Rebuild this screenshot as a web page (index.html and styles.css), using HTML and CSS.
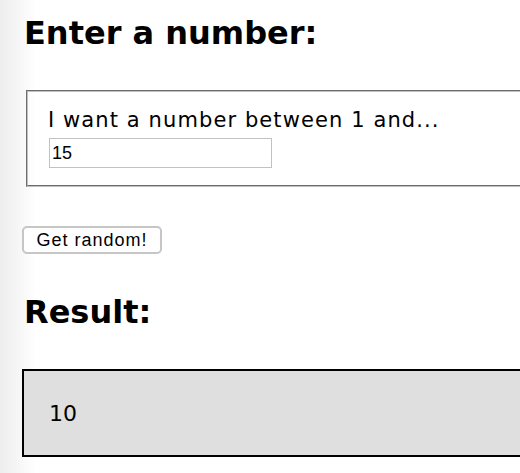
FILE: index.html
```html
<!DOCTYPE html>
<html lang="en">
<head>
    <meta charset="UTF-8">
    <meta name="viewport" content="width=device-width, initial-scale=1.0">
    <title>Random Number</title>
    <link rel="stylesheet" href="styles.css">
</head>
<body>
    <div class="page">
        <h1>Enter a number:</h1>
        <fieldset class="range-box">
            <label for="maxNumber">I want a number between 1 and...</label>
            <input type="text" id="maxNumber" value="15">
        </fieldset>
        <button id="randomBtn">Get random!</button>
        <h1>Result:</h1>
        <div class="result" id="result">10</div>
    </div>

    <script>
const randomBtn = document.getElementById('randomBtn');
const maxInput = document.getElementById('maxNumber');
const result = document.getElementById('result');

randomBtn.addEventListener('click', () => {
    const max = parseInt(maxInput.value, 10) || 1;
    result.textContent = Math.floor(Math.random() * max) + 1;
});
    </script>
</body>
</html>
```

FILE: styles.css
```css
body {
    margin: 0;
    padding: 0;
    font-family: 'DejaVu Sans', sans-serif;
    background: linear-gradient(to right, #ededed, #fff 36px);
    color: #000;
    overflow: hidden;
}
.page {
    padding: 15px 0 0 22px;
    width: 600px;
}
h1 {
    font-size: 32px;
    font-weight: bold;
    margin: 0 0 38px 2px;
    line-height: 37px;
}
.range-box {
    margin: 0 0 39px 4px;
    padding: 17px 20px 17px 20px;
    border: 2px groove #c0c0c0;
}
.range-box label {
    display: block;
    font-size: 21px;
    line-height: 22px;
    letter-spacing: 1.1px;
    margin-bottom: 7px;
}
.range-box input {
    display: block;
    width: 223px;
    height: 30px;
    box-sizing: border-box;
    margin-left: 1px;
    padding: 0 2px;
    border: 1px solid #c2c2c2;
    font-family: 'Liberation Sans', sans-serif;
    font-size: 18px;
}
button {
    display: block;
    width: 140px;
    height: 28px;
    margin: 0 0 40px 0;
    padding: 0;
    background-color: #fff;
    border: 2px solid #c6c6c6;
    border-radius: 5px;
    font-family: 'Liberation Sans', sans-serif;
    font-size: 18px;
    letter-spacing: 1px;
    color: #000;
}
.result {
    background-color: #dfdfdf;
    border: 2px solid #000;
    padding: 30px 25px 28px 25px;
    font-size: 22px;
    line-height: 26px;
}
```
